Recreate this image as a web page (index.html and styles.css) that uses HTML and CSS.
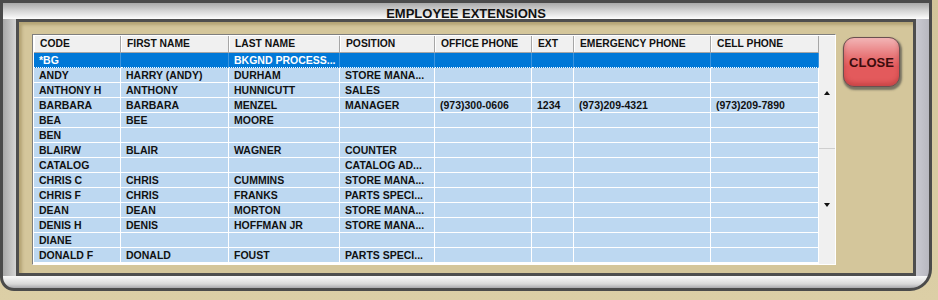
FILE: index.html
```html
<!doctype html>
<html>
<head>
    <meta charset="utf-8">
    <title>Employee Extensions</title>
    <link rel="stylesheet" href="styles.css">
</head>
<body>
    <div class="frame">
        <div class="title">EMPLOYEE EXTENSIONS</div>
        <div class="panel">
            <div class="grid">
                <div class="rows">
                    <div class="row head">
                        <div>CODE</div><div>FIRST NAME</div><div>LAST NAME</div><div>POSITION</div>
                        <div>OFFICE PHONE</div><div>EXT</div><div>EMERGENCY PHONE</div><div>CELL PHONE</div>
                    </div>
                    <div class="row sel">
                        <div>*BG</div><div></div><div>BKGND PROCESS...</div><div></div>
                        <div></div><div></div><div></div><div></div>
                    </div>
                    <div class="row">
                        <div>ANDY</div><div>HARRY (ANDY)</div><div>DURHAM</div><div>STORE MANA...</div>
                        <div></div><div></div><div></div><div></div>
                    </div>
                    <div class="row">
                        <div>ANTHONY H</div><div>ANTHONY</div><div>HUNNICUTT</div><div>SALES</div>
                        <div></div><div></div><div></div><div></div>
                    </div>
                    <div class="row">
                        <div>BARBARA</div><div>BARBARA</div><div>MENZEL</div><div>MANAGER</div>
                        <div>(973)300-0606</div><div>1234</div><div>(973)209-4321</div><div>(973)209-7890</div>
                    </div>
                    <div class="row">
                        <div>BEA</div><div>BEE</div><div>MOORE</div><div></div>
                        <div></div><div></div><div></div><div></div>
                    </div>
                    <div class="row">
                        <div>BEN</div><div></div><div></div><div></div>
                        <div></div><div></div><div></div><div></div>
                    </div>
                    <div class="row">
                        <div>BLAIRW</div><div>BLAIR</div><div>WAGNER</div><div>COUNTER</div>
                        <div></div><div></div><div></div><div></div>
                    </div>
                    <div class="row">
                        <div>CATALOG</div><div></div><div></div><div>CATALOG AD...</div>
                        <div></div><div></div><div></div><div></div>
                    </div>
                    <div class="row">
                        <div>CHRIS C</div><div>CHRIS</div><div>CUMMINS</div><div>STORE MANA...</div>
                        <div></div><div></div><div></div><div></div>
                    </div>
                    <div class="row">
                        <div>CHRIS F</div><div>CHRIS</div><div>FRANKS</div><div>PARTS SPECI...</div>
                        <div></div><div></div><div></div><div></div>
                    </div>
                    <div class="row">
                        <div>DEAN</div><div>DEAN</div><div>MORTON</div><div>STORE MANA...</div>
                        <div></div><div></div><div></div><div></div>
                    </div>
                    <div class="row">
                        <div>DENIS H</div><div>DENIS</div><div>HOFFMAN JR</div><div>STORE MANA...</div>
                        <div></div><div></div><div></div><div></div>
                    </div>
                    <div class="row">
                        <div>DIANE</div><div></div><div></div><div></div>
                        <div></div><div></div><div></div><div></div>
                    </div>
                    <div class="row">
                        <div>DONALD F</div><div>DONALD</div><div>FOUST</div><div>PARTS SPECI...</div>
                        <div></div><div></div><div></div><div></div>
                    </div>
                </div>
                <div class="scroll">
                    <div class="arrow up"></div>
                    <div class="thumb-line"></div>
                    <div class="arrow down"></div>
                </div>
            </div>
            <button type="button" class="close">CLOSE</button>
        </div>
    </div>
</body>
</html>
```

FILE: styles.css
```css
/* Reset */
* { padding:0; margin:0; box-sizing:border-box; }

body {
    background: linear-gradient(to bottom, #d2c49a, #dccfa6);
    font-family: "Liberation Sans", Arial, sans-serif;
    width: 938px;
    height: 300px;
    overflow: hidden;
}

/* Outer bezel */
.frame {
    width: 932px;
    height: 291px;
    border: 3px solid #4b4b4b;
    border-radius: 0 0 22px 14px;
    background:
        linear-gradient(to bottom, #a9a9a9, #d6d6d6 8px, #fdfdfd) top / 100% 16px no-repeat,
        linear-gradient(to bottom, #fafafa, #d8d8d8 8px, #a8a8ac) bottom / 100% 12px no-repeat,
        linear-gradient(90deg, #a8a8a8, #d8d8d8 14px, #ececec 50%, #d0d0d8 98%, #b8b8c0);
}
.title {
    height: 16px;
    line-height: 22px;
    text-align: center;
    font-size: 13px;
    font-weight: bold;
    color: #111;
}

/* Tan panel */
.panel {
    display: flex;
    align-items: flex-start;
    width: 900px;
    height: 257px;
    margin-left: 13px;
    padding: 12px 0 0 13px;
    border: 3px solid #4e4e4e;
    background: #d4c69b;
    box-shadow: inset 3px 3px 3px rgba(120,100,50,0.35);
}

/* Data grid */
.grid {
    display: flex;
    border: 1px solid;
    border-color: #7e7e7e #fff #fff #7e7e7e;
    padding: 1px 0 0 1px;
    background: #fff;
}
.rows { width: 785px; }
.row {
    display: grid;
    grid-template-columns: 87px 108px 111px 95px 97px 42px 137px 108px;
    height: 15px;
    background: #bdd8f1;
    font-size: 10.5px;
    font-weight: bold;
    color: #111;
}
.row > div {
    border-right: 1px solid #fff;
    border-bottom: 1px solid #fff;
    padding-left: 5px;
    line-height: 15px;
    white-space: nowrap;
    overflow: hidden;
}
.row.head {
    height: 17px;
    background: #f0f0f0;
    font-size: 10.3px;
}
.row.head > div {
    border-right: 1px solid #a6a6a6;
    border-bottom: 1px solid #a6a6a6;
    box-shadow: inset 1px 0 #fff;
    padding-left: 6px;
    line-height: 16px;
}
.row.sel {
    background: #0078d7;
    color: #fff;
}
.row.sel > div {
    border-right-color: #3d95de;
    border-bottom: 1px dotted #fff;
}

.scroll {
    width: 16px;
    height: 228px;
    background: #f0f0f0;
    display: flex;
    flex-direction: column;
    align-items: center;
}
.arrow {
    width: 0;
    height: 0;
    border-left: 3px solid transparent;
    border-right: 3px solid transparent;
}
.arrow.up {
    margin-top: 55px;
    border-bottom: 4px solid #111;
}
.arrow.down {
    margin-top: 54px;
    border-top: 4px solid #111;
}
.thumb-line {
    width: 16px;
    height: 1px;
    margin-top: 53px;
    background: #cfcfcf;
}

/* Close button */
.close {
    width: 57px;
    height: 50px;
    margin: 3px 0 0 7px;
    border: 1px solid #6a5050;
    border-radius: 11px;
    background:
        linear-gradient(to bottom, rgba(255,255,255,0.55), rgba(255,255,255,0.15) 40%, rgba(255,255,255,0) 60%),
        #e35a5c;
    box-shadow: 1px 2px 2px 1px rgba(60,60,60,0.6), inset 0 -3px 4px rgba(150,30,30,0.35);
    font-family: "Liberation Sans", Arial, sans-serif;
    font-size: 13px;
    font-weight: bold;
    color: #3c0c0c;
}
```
